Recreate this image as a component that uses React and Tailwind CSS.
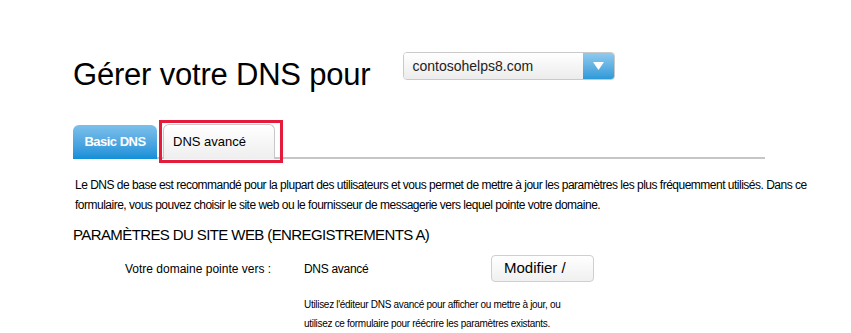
export default function App() {
  return (
    <div className="w-[851px] h-[333px] bg-white overflow-hidden text-black" style={{ fontFamily: '"Liberation Sans", Arial, sans-serif' }}>
      <div className="pl-[73px] pt-[52px] flex items-start">
        <h1 className="text-[31px] leading-[34px] font-normal mt-[6px] tracking-[-0.2px]">Gérer votre DNS pour</h1>
        <div className="ml-[32px] w-[212px] h-[28px] flex rounded-[4px] border border-[#c9c9c9] overflow-hidden">
          <div className="flex-1 bg-gradient-to-b from-white to-[#ececec] pl-[9px] flex items-center text-[14px] text-[#222]">contosohelps8.com</div>
          <div className="w-[31px] bg-gradient-to-b from-[#8fcaee] to-[#2b9ad9] flex items-center justify-center">
            <svg width="11" height="8" viewBox="0 0 11 8"><path d="M0 0 H11 L5.5 8 Z" fill="white" /></svg>
          </div>
        </div>
      </div>
      <div className="ml-[73px] mt-[32px] w-[692px] h-[35px] border-b-2 border-[#c6c6c6] flex items-end gap-[6px]">
        <div className="w-[84px] h-[34px] rounded-t-[6px] bg-gradient-to-b from-[#7cc0ea] to-[#0d8fd8] text-white font-bold text-[13px] tracking-[-0.5px] flex items-center justify-center -mb-[2px]">Basic DNS</div>
        <div className="relative -mb-[2px]">
          <div className="w-[112px] h-[35px] rounded-t-[6px] border border-b-0 border-[#c8c8c8] bg-gradient-to-b from-white to-[#eeeeee] text-[13px] flex items-center pl-[9px]">DNS avancé</div>
          <div className="absolute left-[-4px] top-[-4px] w-[124px] h-[43px] border-[3px] border-[#e41b3b]"></div>
        </div>
      </div>
      <p className="ml-[75px] mt-[16px] w-[760px] text-[12px] leading-[20px] tracking-[-0.5px]">Le DNS de base est recommandé pour la plupart des utilisateurs et vous permet de mettre à jour les paramètres les plus fréquemment utilisés. Dans ce formulaire, vous pouvez choisir le site web ou le fournisseur de messagerie vers lequel pointe votre domaine.</p>
      <h2 className="ml-[73px] mt-[11px] text-[15px] leading-[18px] tracking-[-0.6px]">PARAMÈTRES DU SITE WEB (ENREGISTREMENTS A)</h2>
      <div className="flex items-center mt-[11px]">
        <div className="ml-[125px] w-[179px] text-[12px] tracking-[0px]">Votre domaine pointe vers :</div>
        <div className="w-[187px] text-[12px] tracking-[-0.3px]">DNS avancé</div>
        <div className="w-[103px] h-[27px] rounded-[4px] border border-[#cfcfcf] bg-gradient-to-b from-white to-[#f0f0f0] text-[15px] flex items-center pl-[12px]">Modifier /</div>
      </div>
      <p className="ml-[304px] mt-[13px] w-[262px] text-[10px] leading-[19px] tracking-[-0.3px]">Utilisez l'éditeur DNS avancé pour afficher ou mettre à jour, ou utilisez ce formulaire pour réécrire les paramètres existants.</p>
    </div>
  );
}
